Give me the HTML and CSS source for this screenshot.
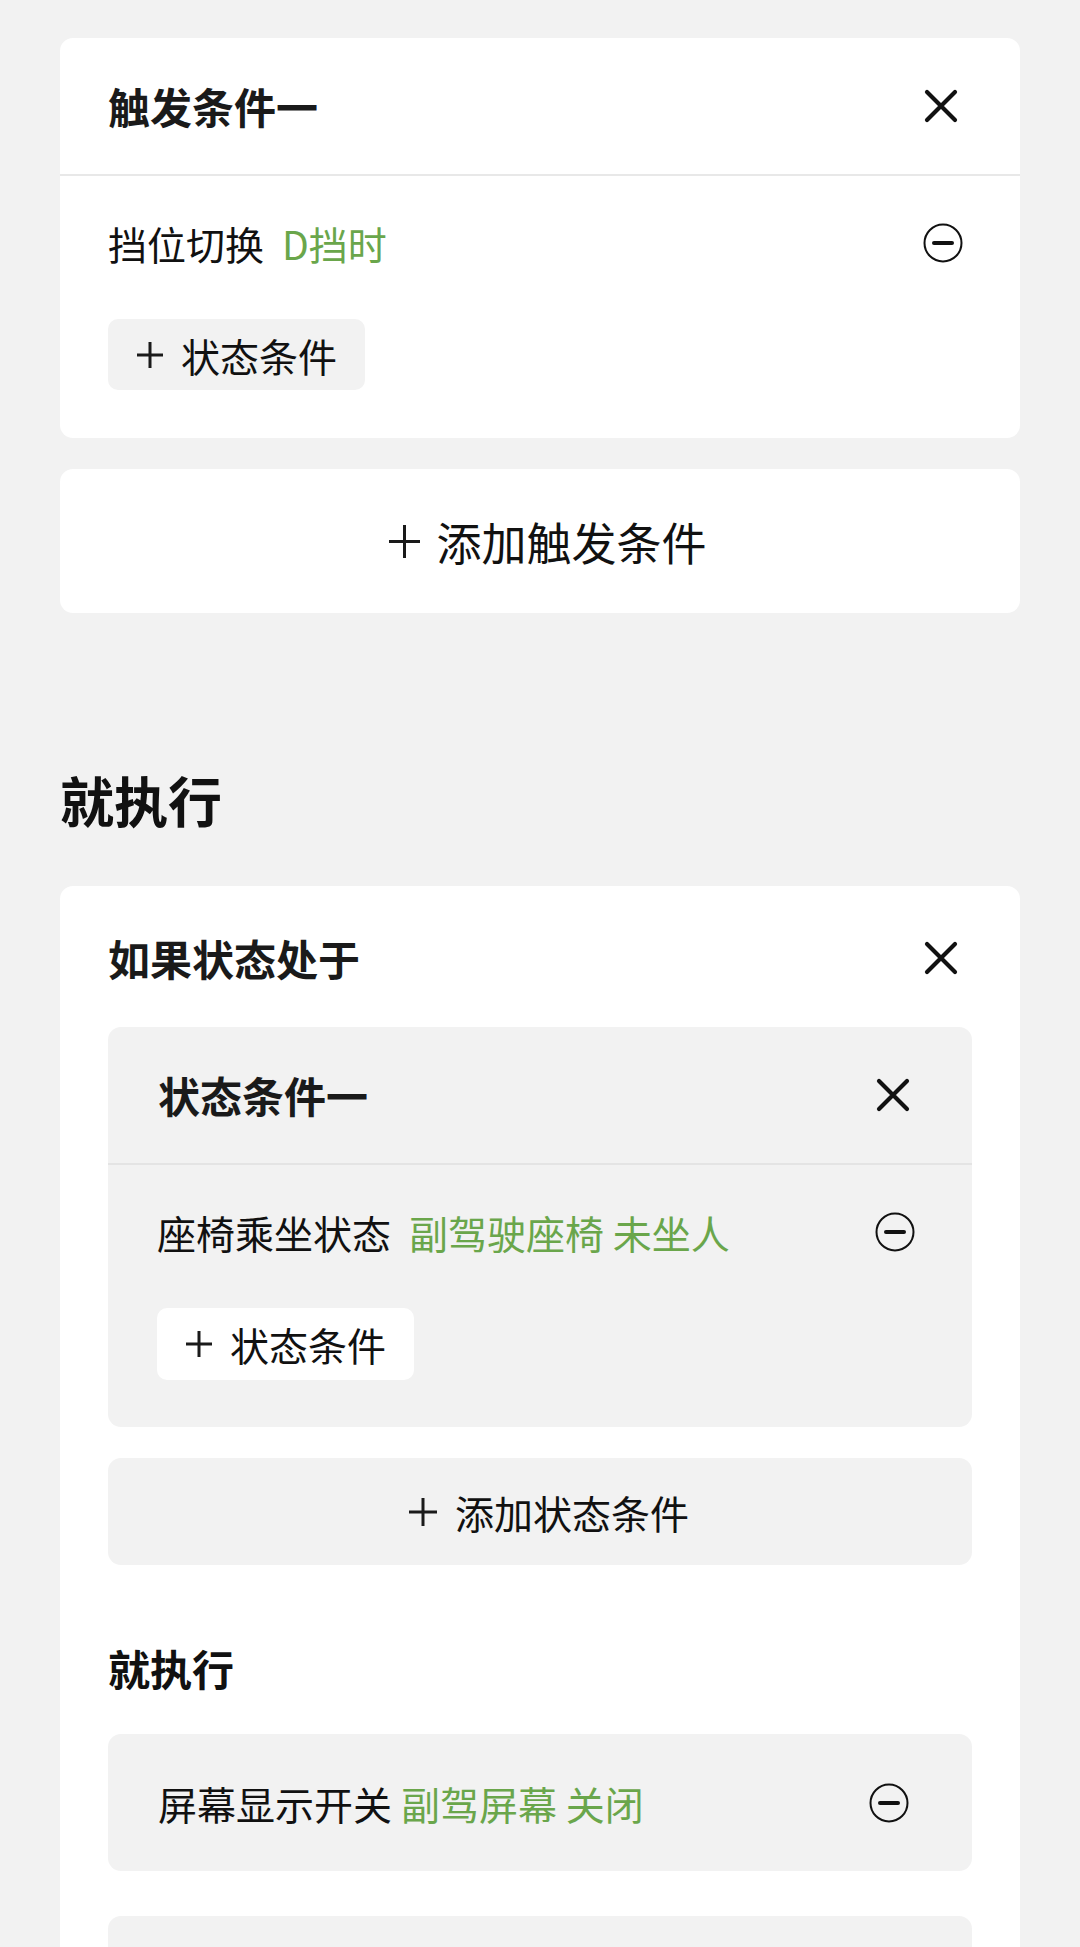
FILE: index.html
```html
<!DOCTYPE html>
<html lang="zh-CN">
<head>
<meta charset="utf-8">
<title>触发条件</title>
<link rel="stylesheet" href="styles.css">
</head>
<body>
<main class="page">
  <section class="card">
    <div class="card-head">
      <h2 class="card-title">触发条件一</h2>
      <svg class="icon-close" viewBox="0 0 34 34" aria-hidden="true"><path d="M3 3L31 31M31 3L3 31"/></svg>
    </div>
    <div class="card-body">
      <div class="cond-row">
        <span class="cond-text">挡位切换<span class="cond-value">D挡时</span></span>
        <svg class="icon-minus" viewBox="0 0 40 40" aria-hidden="true"><circle cx="20" cy="20" r="18.5"/><path d="M11 20H29"/></svg>
      </div>
      <div class="chip chip-grey">
        <svg class="icon-plus" viewBox="0 0 26 26" aria-hidden="true"><path d="M13 0V26M0 13H26"/></svg>
        <span>状态条件</span>
      </div>
    </div>
  </section>

  <div class="add-trigger">
    <svg class="icon-plus icon-plus-lg" viewBox="0 0 31 33" aria-hidden="true"><path d="M15.5 0V33M0 16.5H31"/></svg>
    <span>添加触发条件</span>
  </div>

  <h1 class="section-title">就执行</h1>

  <section class="card card-tall">
    <div class="card-head card-head-plain">
      <h2 class="card-title">如果状态处于</h2>
      <svg class="icon-close" viewBox="0 0 34 34" aria-hidden="true"><path d="M3 3L31 31M31 3L3 31"/></svg>
    </div>

    <div class="state-box">
      <div class="state-head">
        <h3 class="card-title">状态条件一</h3>
        <svg class="icon-close" viewBox="0 0 34 34" aria-hidden="true"><path d="M3 3L31 31M31 3L3 31"/></svg>
      </div>
      <div class="state-body">
        <div class="cond-row">
          <span class="cond-text">座椅乘坐状态<span class="cond-value">副驾驶座椅 未坐人</span></span>
          <svg class="icon-minus" viewBox="0 0 40 40" aria-hidden="true"><circle cx="20" cy="20" r="18.5"/><path d="M11 20H29"/></svg>
        </div>
        <div class="chip chip-white">
          <svg class="icon-plus" viewBox="0 0 26 26" aria-hidden="true"><path d="M13 0V26M0 13H26"/></svg>
          <span>状态条件</span>
        </div>
      </div>
    </div>

    <div class="add-state">
      <svg class="icon-plus icon-plus-md" viewBox="0 0 28 28" aria-hidden="true"><path d="M14 0V28M0 14H28"/></svg>
      <span>添加状态条件</span>
    </div>

    <h3 class="sub-title">就执行</h3>

    <div class="action-box">
      <span class="cond-text">屏幕显示开关<span class="action-value">副驾屏幕 关闭</span></span>
      <svg class="icon-minus" viewBox="0 0 40 40" aria-hidden="true"><circle cx="20" cy="20" r="18.5"/><path d="M11 20H29"/></svg>
    </div>

    <div class="action-box action-box-empty"></div>
  </section>
</main>
</body>
</html>
```

FILE: styles.css
```css
* {
  box-sizing: border-box;
}

html, body {
  margin: 0;
  padding: 0;
}

body {
  background: #f2f2f2;
  font-family: "Noto Sans CJK SC", "Noto Sans", sans-serif;
  color: #111111;
  width: 1080px;
  height: 1947px;
  overflow: hidden;
}

.page {
  padding: 38px 60px 0 60px;
  display: flex;
  flex-direction: column;
}

.card {
  background: #ffffff;
  border-radius: 13px;
  display: flex;
  flex-direction: column;
}

.card-head {
  height: 138px;
  display: flex;
  align-items: center;
  justify-content: space-between;
  padding: 0 62px 0 48px;
  border-bottom: 2px solid #e8e8e8;
}

.card-title {
  margin: 0;
  font-size: 42px;
  line-height: 68px;
  font-weight: 700;
  color: #1a1a1a;
}

.icon-close {
  width: 34px;
  height: 34px;
  flex: none;
  fill: none;
  stroke: #111111;
  stroke-width: 4.2;
  stroke-linecap: round;
}

.icon-minus {
  width: 40px;
  height: 40px;
  flex: none;
  fill: none;
  stroke: #111111;
}

.icon-minus circle {
  stroke-width: 2;
}

.icon-minus path {
  stroke-width: 4;
  stroke-linecap: round;
}

.icon-plus {
  width: 26px;
  height: 26px;
  flex: none;
  fill: none;
  stroke: #1a1a1a;
  stroke-width: 3;
}

.icon-plus-lg {
  width: 31px;
  height: 33px;
}

.icon-plus-md {
  width: 28px;
  height: 28px;
}

.card-body {
  padding: 39px 57px 48px 48px;
  display: flex;
  flex-direction: column;
  align-items: flex-start;
}

.cond-row {
  align-self: stretch;
  height: 56px;
  display: flex;
  align-items: center;
  justify-content: space-between;
  margin-bottom: 48px;
}

.cond-text {
  font-size: 39px;
  line-height: 56px;
  color: #111111;
  white-space: nowrap;
}

.cond-value {
  color: #6aa64b;
  margin-left: 18px;
}

.action-value {
  color: #6aa64b;
  margin-left: 9px;
}

.chip {
  display: flex;
  align-items: center;
  gap: 18px;
  height: 71px;
  padding: 0 28px 0 29px;
  border-radius: 10px;
  font-size: 39px;
  color: #111111;
}

.chip-grey {
  background: #f2f2f2;
}

.chip-white {
  background: #ffffff;
  height: 72px;
}

.add-trigger {
  margin-top: 31px;
  height: 144px;
  background: #ffffff;
  border-radius: 13px;
  display: flex;
  align-items: center;
  justify-content: center;
  gap: 16px;
  padding-left: 16px;
  font-size: 45px;
  color: #111111;
}

.section-title {
  margin: 151px 0 50px 0;
  font-size: 54px;
  line-height: 72px;
  font-weight: 700;
  color: #111111;
}

.card-tall {
  padding: 0 48px;
}

.card-head-plain {
  height: auto;
  padding: 38px 14px 0 0;
  border-bottom: none;
  margin-bottom: 35px;
}

.state-box {
  background: #f2f2f2;
  border-radius: 13px;
  display: flex;
  flex-direction: column;
}

.state-head {
  height: 138px;
  display: flex;
  align-items: center;
  justify-content: space-between;
  padding: 0 62px 0 50px;
  border-bottom: 2px solid #e4e4e4;
}

.state-body {
  padding: 39px 57px 47px 49px;
  display: flex;
  flex-direction: column;
  align-items: flex-start;
}

.add-state {
  margin-top: 31px;
  height: 107px;
  background: #f2f2f2;
  border-radius: 13px;
  display: flex;
  align-items: center;
  justify-content: center;
  gap: 18px;
  padding-left: 18px;
  font-size: 39px;
  color: #111111;
}

.sub-title {
  margin: 73px 0 36px 0;
  font-size: 42px;
  line-height: 60px;
  font-weight: 700;
  color: #111111;
}

.action-box {
  height: 137px;
  background: #f2f2f2;
  border-radius: 13px;
  display: flex;
  align-items: center;
  justify-content: space-between;
  padding: 0 63px 0 50px;
  margin-bottom: 45px;
}
```
